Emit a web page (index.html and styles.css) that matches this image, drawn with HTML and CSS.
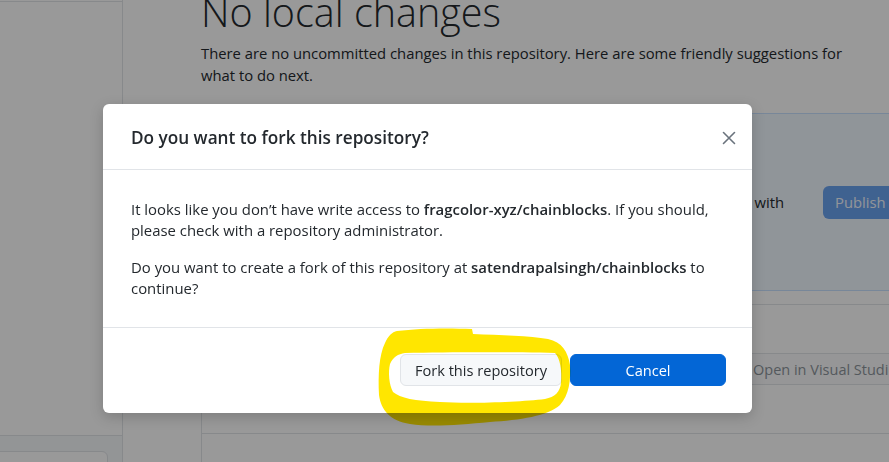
FILE: index.html
```html
<!DOCTYPE html>
<html lang="en">
<head>
<meta charset="utf-8">
<title>Fork repository</title>
<link rel="stylesheet" href="styles.css">
</head>
<body>
<div class="app">
  <aside class="sidebar">
    <div class="tabs"></div>
    <div class="file-list"></div>
    <div class="commit-area">
      <div class="summary"></div>
    </div>
  </aside>
  <main class="main">
    <div class="content">
      <h1 class="title">No local changes</h1>
      <p class="intro">There are no uncommitted changes in this repository. Here are some friendly suggestions for what to do next.</p>
      <section class="callout">
        <div class="callout-text">
          <div class="callout-title">Publish your repository to GitHub</div>
          <div>By publishing it on GitHub you can share it, and collaborate with</div>
          <div>others.</div>
        </div>
        <button class="publish-btn">Publish repository</button>
      </section>
      <section class="actions">
        <div class="action">
          <div class="action-text">
            <div class="action-title">Open the repository in your external editor</div>
            <div>Select your editor in Options</div>
          </div>
          <button class="action-btn">Open in Visual Studio Code</button>
        </div>
        <div class="action">
          <div class="action-text">
            <div class="action-title">View the files of your repository in Explorer</div>
          </div>
          <button class="action-btn">Show in Explorer</button>
        </div>
      </section>
    </div>
  </main>
</div>

<div class="backdrop"></div>

<div class="dialog" role="dialog">
  <header class="dialog-header">
    <h2 class="dialog-title">Do you want to fork this repository?</h2>
    <button class="close" aria-label="Close">
      <svg width="14" height="14" viewBox="0 0 14 14"><path d="M1.5 1.5 L12.5 12.5 M12.5 1.5 L1.5 12.5" stroke="#6a737d" stroke-width="1.6" stroke-linecap="round" fill="none"/></svg>
    </button>
  </header>
  <div class="dialog-body">
    <p>It looks like you don’t have write access to <strong>fragcolor-xyz/chainblocks</strong>. If you should, please check with a repository administrator.</p>
    <p>Do you want to create a fork of this repository at <strong>satendrapalsingh/chainblocks</strong> to continue?</p>
  </div>
  <footer class="dialog-footer">
    <button class="btn btn-secondary">Fork this repository</button>
    <button class="btn btn-primary">Cancel</button>
  </footer>
</div>

<svg class="highlight" width="889" height="462" viewBox="0 0 889 462">
  <path fill="#ffe600" fill-rule="evenodd" d="M397 331 C420 328 450 328 472 329 L473 334 C500 335 530 336 548 339 C562 342 568 352 570 365 C571 380 569 395 560 405 C548 416 520 420 490 422 C460 425 430 427 410 424 C390 421 381 410 379 395 C378 375 379 355 385 343 C388 336 392 332 397 331 Z M405 353 C450 352 520 352 555 353 C560 358 562 370 561 383 C560 392 555 397 545 399 C520 402 470 404 440 402 C415 401 400 398 393 392 C389 385 388 372 390 364 C393 357 398 354 405 353 Z"/>
</svg>
</body>
</html>
```

FILE: styles.css
```css
* { box-sizing: border-box; }

html, body {
  margin: 0;
  height: 100%;
  overflow: hidden;
}

body {
  font-family: "Open Sans", "Liberation Sans", sans-serif;
  color: #24292e;
  background: #ffffff;
}

button {
  font-family: inherit;
}

/* ---------- app behind the dialog (cropped window) ---------- */
.app {
  display: flex;
  height: 600px;
  width: calc(100% + 130px);
  margin: -39px 0 0 -130px;
}

.sidebar {
  flex: 0 0 253px;
  border-right: 1px solid #e1e4e8;
  display: flex;
  flex-direction: column;
}

.tabs {
  flex: none;
  height: 41px;
  border-bottom: 1px solid #e1e4e8;
}

.file-list { flex: 1; }

.commit-area {
  flex: none;
  height: 126px;
  border-top: 1px solid #e1e4e8;
  background: #f6f8fa;
  padding: 15px 14px 0 20px;
}

.summary {
  height: 60px;
  background: #ffffff;
  border: 1px solid #e1e4e8;
  border-radius: 6px;
}

.main {
  flex: 1;
  overflow: hidden;
  padding: 28px 0 0 78px;
}

.content { width: 808px; }

.title {
  font-weight: 300;
  font-size: 39.5px;
  line-height: 46px;
  margin: 0 0 7px;
}

.intro {
  font-size: 14.8px;
  line-height: 22px;
  margin: 0 0 27px;
  max-width: 665px;
}

.callout {
  height: 178px;
  border: 1px solid #c8e1ff;
  background: #f1f8ff;
  border-radius: 6px;
  display: grid;
  grid-template-columns: 566px auto;
  column-gap: 39px;
  align-items: center;
  padding: 0 16px;
  margin-bottom: 13px;
}

.callout-text {
  justify-self: end;
  font-size: 14.8px;
  line-height: 21px;
  white-space: nowrap;
  word-spacing: 1px;
}

.callout-title { font-weight: 600; }

.publish-btn {
  justify-self: start;
  height: 33px;
  padding: 0 12px;
  border: 0;
  border-radius: 6px;
  background: #6aa3f0;
  color: #f4f8ff;
  font-size: 14.8px;
  white-space: nowrap;
}

.actions {
  border: 1px solid #e1e4e8;
  border-radius: 6px;
}

.action {
  height: 129px;
  display: grid;
  grid-template-columns: 500px auto;
  column-gap: 22px;
  align-items: center;
  padding: 0 16px;
  border-bottom: 1px solid #e1e4e8;
  font-size: 14.8px;
  line-height: 21px;
}

.action-title { font-weight: 600; }

.action-btn {
  justify-self: start;
  height: 32px;
  padding: 0 12px;
  border: 1px solid #e1e4e8;
  border-radius: 6px;
  background: #fafbfc;
  color: #8d949b;
  font-size: 14.5px;
  white-space: nowrap;
}

/* ---------- modal ---------- */
.backdrop {
  position: fixed;
  inset: 0;
  background: rgba(0, 0, 0, 0.4);
}

.dialog {
  position: absolute;
  left: 103px;
  top: 104px;
  width: 649px;
  background: #ffffff;
  border-radius: 6px;
  box-shadow: 0 4px 14px rgba(0, 0, 0, 0.18);
}

.dialog-header {
  height: 66px;
  border-bottom: 1px solid #e1e4e8;
  display: flex;
  align-items: center;
  justify-content: space-between;
  padding: 2px 16px 0 28px;
}

.dialog-title {
  margin: 0;
  font-size: 17.2px;
  font-weight: 600;
  line-height: 24px;
}

.close {
  width: 14px;
  height: 14px;
  padding: 0;
  border: 0;
  background: none;
  display: flex;
}

.dialog-body {
  padding: 29px 28px 28px;
}

.dialog-body p {
  margin: 0 0 16px;
  font-size: 14.9px;
  line-height: 21px;
}

.dialog-body p:last-child { margin-bottom: 0; }

.dialog-body strong { font-weight: 600; }

.dialog-footer {
  border-top: 1px solid #e1e4e8;
  padding: 26px 26px 27px;
  display: flex;
  justify-content: flex-end;
  gap: 8px;
}

.btn {
  height: 32px;
  min-width: 156px;
  padding: 0 14px;
  border-radius: 6px;
  font-size: 14.6px;
  white-space: nowrap;
}

.btn-secondary {
  background: #f6f8fa;
  border: 1px solid #e1e4e8;
  color: #24292e;
}

.btn-primary {
  background: #0366d6;
  border: 1px solid #0366d6;
  color: #ffffff;
}

/* ---------- hand-drawn highlighter mark ---------- */
.highlight {
  position: absolute;
  left: 0;
  top: 0;
  pointer-events: none;
  mix-blend-mode: multiply;
}
```
